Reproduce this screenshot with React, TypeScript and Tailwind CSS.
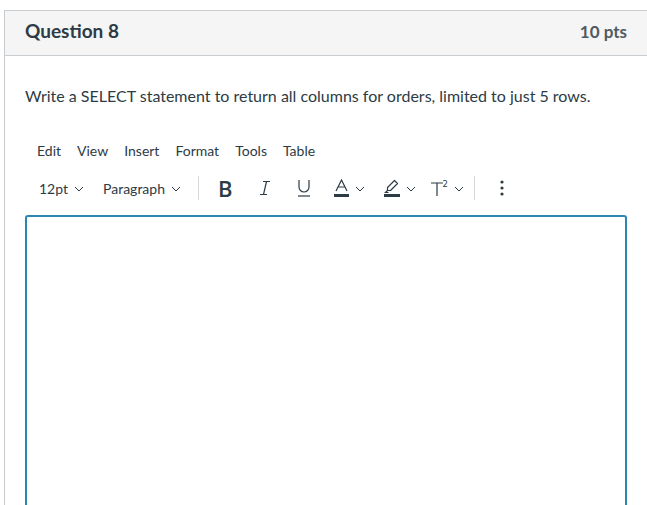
import React from 'react';

const Chevron = () => (
  <svg width="10" height="6" viewBox="0 0 10 6" className="ml-[6px] mt-[2px]">
    <path d="M1 1l4 4 4-4" fill="none" stroke="#2d3b45" strokeWidth="1" />
  </svg>
);

const Sep = ({ className }: { className: string }) => (
  <div className={`w-px h-[24px] bg-[#d4d8db] ${className}`} />
);

export default function App() {
  const menus = ['Edit', 'View', 'Insert', 'Format', 'Tools', 'Table'];

  return (
    <div className="w-[647px] h-[505px] overflow-hidden bg-white pt-[10px] pl-[4px] font-['Lato','Liberation_Sans',sans-serif] text-[#2d3b45]">
      <div className="w-[660px] h-[600px] border-l border-t border-[#c7cdd1]">
        <div className="h-[45px] bg-[#f5f5f5] border-b border-[#c7cdd1] flex items-center justify-between pl-[20px] pr-[37px] pb-[3px]">
          <span className="text-[19px] font-bold">Question 8</span>
          <span className="text-[17px] font-bold text-[#505a61]">10 pts</span>
        </div>

        <div className="pl-[20px] pt-[28px]">
          <p className="text-[16px] leading-[24px]">
            Write a SELECT statement to return all columns for orders, limited to just 5 rows.
          </p>

          <div className="mt-[30px] w-[602px]">
            <div className="flex items-center h-[24px] pl-[12px] gap-[16px] text-[14px]">
              {menus.map((m) => (
                <span key={m}>{m}</span>
              ))}
            </div>

            <div className="flex items-center h-[38px] mt-[7px] pl-[14px] text-[14px]">
              <span className="flex items-center">12pt<Chevron /></span>
              <span className="flex items-center ml-[19px]">Paragraph<Chevron /></span>
              <Sep className="ml-[17px]" />
              <span className="ml-[19px] text-[22px] font-semibold font-['Open_Sans',sans-serif] leading-none">B</span>
              <svg width="12" height="16" viewBox="0 0 12 16" className="ml-[26px]">
                <path d="M4 1.5h7M1 14.5h7M7.5 1.5L4.5 14.5" fill="none" stroke="#2d3b45" strokeWidth="1.2" />
              </svg>
              <svg width="14" height="18" viewBox="0 0 14 18" className="ml-[26px]">
                <path d="M2 1v7a5 5 0 0 0 10 0V1" fill="none" stroke="#2d3b45" strokeWidth="1.2" />
                <path d="M1 17h12" stroke="#2d3b45" strokeWidth="1.2" />
              </svg>
              <span className="flex items-center ml-[23px]">
                <svg width="15" height="18" viewBox="0 0 15 18">
                  <path d="M2 12L7.5 1 13 12M4 8h7" fill="none" stroke="#2d3b45" strokeWidth="1.2" />
                  <rect x="0" y="15" width="15" height="3" fill="#2d3b45" />
                </svg>
                <Chevron />
              </span>
              <span className="flex items-center ml-[19px]">
                <svg width="16" height="18" viewBox="0 0 16 18">
                  <path d="M10.5 1.5l3 3-7 7H3.5v-3z" fill="none" stroke="#2d3b45" strokeWidth="1.2" strokeLinejoin="round" />
                  <path d="M3.5 11.5l-2 2h3" fill="none" stroke="#2d3b45" strokeWidth="1.2" />
                  <rect x="0" y="15" width="16" height="3" fill="#2d3b45" />
                </svg>
                <Chevron />
              </span>
              <span className="flex items-center ml-[14px]">
                <svg width="18" height="18" viewBox="0 0 18 18">
                  <path d="M1 4h12M7 4v13" fill="none" stroke="#2d3b45" strokeWidth="1.2" />
                  <text x="12.5" y="7.5" fontSize="8.5" fill="#2d3b45" fontFamily="DejaVu Sans, sans-serif">2</text>
                </svg>
                <Chevron />
              </span>
              <Sep className="ml-[10px]" />
              <svg width="4" height="16" viewBox="0 0 4 16" className="ml-[25px]">
                <circle cx="2" cy="2" r="1.6" fill="#2d3b45" />
                <circle cx="2" cy="8" r="1.6" fill="#2d3b45" />
                <circle cx="2" cy="14" r="1.6" fill="#2d3b45" />
              </svg>
            </div>

            <div className="mt-[8px] h-[320px] border-2 border-[#2b87b2] rounded-[3px]" />
          </div>
        </div>
      </div>
    </div>
  );
}
